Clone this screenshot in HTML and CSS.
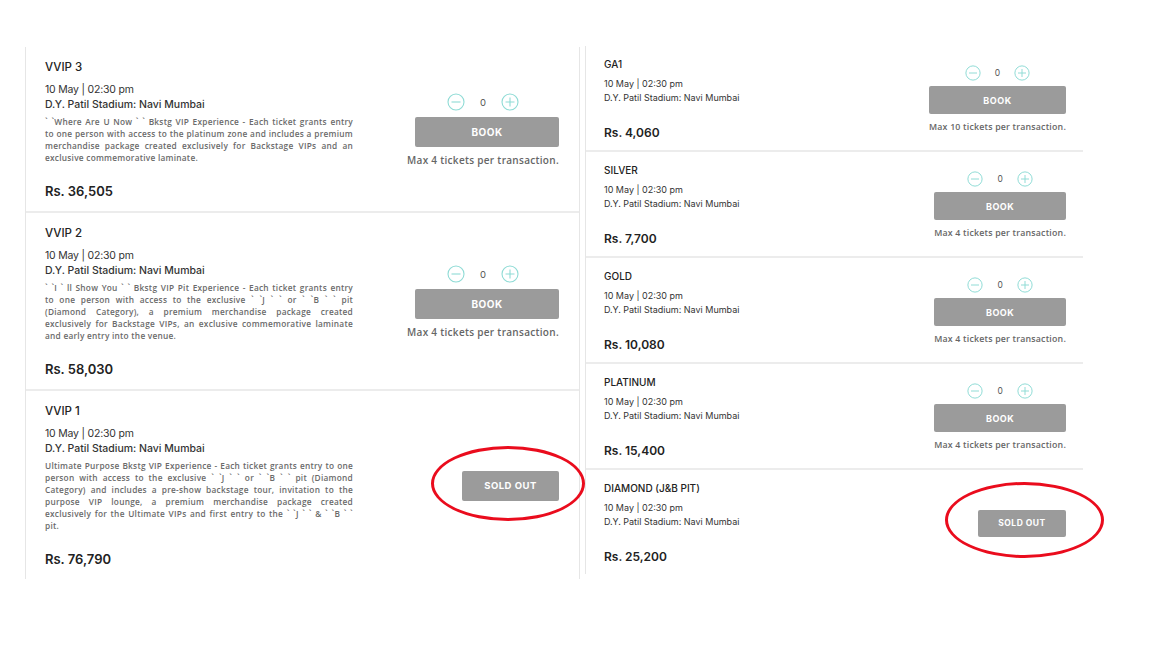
FILE: index.html
```html
<!DOCTYPE html>
<html lang="en">
<head>
    <meta charset="UTF-8">
    <title>Tickets</title>
    <link rel="stylesheet" href="styles.css">
</head>
<body>
    <div class="page">
        <section class="panel panel-big">
            <div class="ticket">
                <div class="info">
                    <h3 class="name">VVIP 3</h3>
                    <p class="date">10 May | 02:30 pm</p>
                    <p class="venue">D.Y. Patil Stadium: Navi Mumbai</p>
                    <p class="desc">
                        <span>` `Where Are U Now ` ` Bkstg VIP Experience - Each ticket grants entry</span>
                        <span>to one person with access to the platinum zone and includes a premium</span>
                        <span>merchandise package created exclusively for Backstage VIPs and an</span>
                        <span class="end">exclusive commemorative laminate.</span>
                    </p>
                    <p class="price">Rs. 36,505</p>
                </div>
                <div class="action">
                    <div class="stepper">
                        <svg class="step" viewBox="0 0 18 18"><circle cx="9" cy="9" r="8"/><path d="M4.5 9h9"/></svg>
                        <span class="count">0</span>
                        <svg class="step" viewBox="0 0 18 18"><circle cx="9" cy="9" r="8"/><path d="M4.5 9h9M9 4.5v9"/></svg>
                    </div>
                    <button class="book">BOOK</button>
                    <p class="limit">Max 4 tickets per transaction.</p>
                </div>
            </div>
            <div class="ticket">
                <div class="info">
                    <h3 class="name">VVIP 2</h3>
                    <p class="date">10 May | 02:30 pm</p>
                    <p class="venue">D.Y. Patil Stadium: Navi Mumbai</p>
                    <p class="desc">
                        <span>` `I ` ll Show You ` ` Bkstg VIP Pit Experience - Each ticket grants entry</span>
                        <span>to one person with access to the exclusive ` `J ` ` or ` `B ` ` pit</span>
                        <span>(Diamond Category), a premium merchandise package created</span>
                        <span>exclusively for Backstage VIPs, an exclusive commemorative laminate</span>
                        <span class="end">and early entry into the venue.</span>
                    </p>
                    <p class="price">Rs. 58,030</p>
                </div>
                <div class="action">
                    <div class="stepper">
                        <svg class="step" viewBox="0 0 18 18"><circle cx="9" cy="9" r="8"/><path d="M4.5 9h9"/></svg>
                        <span class="count">0</span>
                        <svg class="step" viewBox="0 0 18 18"><circle cx="9" cy="9" r="8"/><path d="M4.5 9h9M9 4.5v9"/></svg>
                    </div>
                    <button class="book">BOOK</button>
                    <p class="limit">Max 4 tickets per transaction.</p>
                </div>
            </div>
            <div class="ticket">
                <div class="info">
                    <h3 class="name">VVIP 1</h3>
                    <p class="date">10 May | 02:30 pm</p>
                    <p class="venue">D.Y. Patil Stadium: Navi Mumbai</p>
                    <p class="desc">
                        <span>Ultimate Purpose Bkstg VIP Experience - Each ticket grants entry to one</span>
                        <span>person with access to the exclusive ` `J ` ` or ` `B ` ` pit (Diamond</span>
                        <span>Category) and includes a pre-show backstage tour, invitation to the</span>
                        <span>purpose VIP lounge, a premium merchandise package created</span>
                        <span>exclusively for the Ultimate VIPs and first entry to the ` `J ` ` &amp; ` `B ` `</span>
                        <span class="end">pit.</span>
                    </p>
                    <p class="price">Rs. 76,790</p>
                </div>
                <div class="action">
                    <div class="sold-wrap">
                        <button class="sold">SOLD OUT</button>
                        <span class="circled"></span>
                    </div>
                </div>
            </div>
        </section>

        <section class="panel panel-small">
            <div class="ticket">
                <div class="info">
                    <h3 class="name">GA1</h3>
                    <p class="date">10 May | 02:30 pm</p>
                    <p class="venue">D.Y. Patil Stadium: Navi Mumbai</p>
                    <p class="price">Rs. 4,060</p>
                </div>
                <div class="action">
                    <div class="stepper">
                        <svg class="step" viewBox="0 0 18 18"><circle cx="9" cy="9" r="8"/><path d="M4.5 9h9"/></svg>
                        <span class="count">0</span>
                        <svg class="step" viewBox="0 0 18 18"><circle cx="9" cy="9" r="8"/><path d="M4.5 9h9M9 4.5v9"/></svg>
                    </div>
                    <button class="book">BOOK</button>
                    <p class="limit">Max 10 tickets per transaction.</p>
                </div>
            </div>
            <div class="ticket">
                <div class="info">
                    <h3 class="name">SILVER</h3>
                    <p class="date">10 May | 02:30 pm</p>
                    <p class="venue">D.Y. Patil Stadium: Navi Mumbai</p>
                    <p class="price">Rs. 7,700</p>
                </div>
                <div class="action">
                    <div class="stepper">
                        <svg class="step" viewBox="0 0 18 18"><circle cx="9" cy="9" r="8"/><path d="M4.5 9h9"/></svg>
                        <span class="count">0</span>
                        <svg class="step" viewBox="0 0 18 18"><circle cx="9" cy="9" r="8"/><path d="M4.5 9h9M9 4.5v9"/></svg>
                    </div>
                    <button class="book">BOOK</button>
                    <p class="limit">Max 4 tickets per transaction.</p>
                </div>
            </div>
            <div class="ticket">
                <div class="info">
                    <h3 class="name">GOLD</h3>
                    <p class="date">10 May | 02:30 pm</p>
                    <p class="venue">D.Y. Patil Stadium: Navi Mumbai</p>
                    <p class="price">Rs. 10,080</p>
                </div>
                <div class="action">
                    <div class="stepper">
                        <svg class="step" viewBox="0 0 18 18"><circle cx="9" cy="9" r="8"/><path d="M4.5 9h9"/></svg>
                        <span class="count">0</span>
                        <svg class="step" viewBox="0 0 18 18"><circle cx="9" cy="9" r="8"/><path d="M4.5 9h9M9 4.5v9"/></svg>
                    </div>
                    <button class="book">BOOK</button>
                    <p class="limit">Max 4 tickets per transaction.</p>
                </div>
            </div>
            <div class="ticket">
                <div class="info">
                    <h3 class="name">PLATINUM</h3>
                    <p class="date">10 May | 02:30 pm</p>
                    <p class="venue">D.Y. Patil Stadium: Navi Mumbai</p>
                    <p class="price">Rs. 15,400</p>
                </div>
                <div class="action">
                    <div class="stepper">
                        <svg class="step" viewBox="0 0 18 18"><circle cx="9" cy="9" r="8"/><path d="M4.5 9h9"/></svg>
                        <span class="count">0</span>
                        <svg class="step" viewBox="0 0 18 18"><circle cx="9" cy="9" r="8"/><path d="M4.5 9h9M9 4.5v9"/></svg>
                    </div>
                    <button class="book">BOOK</button>
                    <p class="limit">Max 4 tickets per transaction.</p>
                </div>
            </div>
            <div class="ticket">
                <div class="info">
                    <h3 class="name">DIAMOND (J&amp;B PIT)</h3>
                    <p class="date">10 May | 02:30 pm</p>
                    <p class="venue">D.Y. Patil Stadium: Navi Mumbai</p>
                    <p class="price">Rs. 25,200</p>
                </div>
                <div class="action">
                    <div class="sold-wrap">
                        <button class="sold">SOLD OUT</button>
                        <span class="circled"></span>
                    </div>
                </div>
            </div>
        </section>
    </div>
</body>
</html>
```

FILE: styles.css
```css
body {
    margin: 0;
    background: #fff;
    font-family: "Inter", "Open Sans", sans-serif;
    color: #222;
}
p, h3 {
    margin: 0;
}
.page {
    display: flex;
    align-items: flex-start;
    gap: 5px;
    padding: 46px 0 0 25px;
}
.panel {
    border-left: 1px solid #e6e6e6;
}
.panel-big {
    width: 553px;
    margin-top: 1px;
    border-right: 1px solid #e6e6e6;
}
.panel-small {
    width: 497px;
}
.ticket {
    display: flex;
    align-items: center;
    justify-content: space-between;
    border-bottom: 2px solid #ececec;
}
.ticket:last-child {
    border-bottom: none;
}

/* left column, larger cards */
.panel-big .ticket {
    padding: 13px 20px 12px 19px;
}
.panel-big .name {
    font-size: 11.5px;
    font-weight: 500;
    line-height: 14px;
}
.panel-big .date {
    margin-top: 8px;
    font-size: 10.5px;
    line-height: 15px;
    color: #333;
    letter-spacing: -0.2px;
}
.panel-big .venue {
    font-size: 10.5px;
    font-weight: 500;
    line-height: 15px;
    color: #333;
}
.desc {
    width: 308px;
    margin-top: 4px;
    font-family: "Open Sans", sans-serif;
    font-size: 8.3px;
    font-weight: 600;
    line-height: 12px;
    color: #6a6a6a;
    letter-spacing: 0.25px;
}
.desc span {
    display: block;
    white-space: nowrap;
    text-align: justify;
    text-align-last: justify;
}
.desc .end {
    text-align-last: left;
}
.panel-big .price {
    margin-top: 19px;
    font-size: 13px;
    font-weight: 600;
    line-height: 16px;
}
.panel-big .action {
    width: 152px;
}
.panel-big .step {
    width: 18px;
    height: 18px;
}
.panel-big .stepper {
    gap: 15px;
}
.panel-big .count {
    font-size: 9.5px;
}
.panel-big .book {
    align-self: flex-end;
    width: 144px;
    height: 30px;
    margin-top: 6px;
    font-size: 10px;
}
.panel-big .limit {
    margin-top: 7px;
    font-size: 10px;
    letter-spacing: 0.3px;
}
.panel-big .sold {
    width: 97px;
    height: 30px;
    font-size: 9.5px;
}
.panel-big .action:has(.sold-wrap) {
    align-items: flex-end;
}
.panel-big .circled {
    left: -31px;
    top: -25px;
    width: 148px;
    height: 69px;
}

/* right column, compact cards */
.panel-small .ticket {
    padding: 12px 17px 10px 18px;
}
.panel-small .name {
    font-size: 10px;
    font-weight: 500;
    line-height: 12px;
}
.panel-small .date {
    margin-top: 8px;
    font-size: 9px;
    line-height: 12px;
    color: #333;
}
.panel-small .venue {
    margin-top: 2px;
    font-size: 9px;
    line-height: 12px;
    color: #333;
}
.panel-small .price {
    margin-top: 22px;
    font-size: 12px;
    font-weight: 600;
    line-height: 14px;
}
.panel-small .step {
    width: 16px;
    height: 16px;
}
.panel-small .stepper {
    gap: 14px;
}
.panel-small .count {
    font-size: 8.5px;
}
.panel-small .book {
    width: 100%;
    height: 28px;
    margin-top: 5px;
    font-size: 9px;
}
.panel-small .limit {
    margin-top: 7px;
    font-size: 8.8px;
}
.panel-small .sold {
    width: 88px;
    height: 27px;
    font-size: 8.5px;
}
.panel-small .circled {
    left: -33px;
    top: -28px;
    width: 153px;
    height: 70px;
}

/* booking controls */
.action {
    display: flex;
    flex-direction: column;
    align-items: stretch;
}
.stepper {
    display: flex;
    justify-content: center;
    align-items: center;
}
.step {
    fill: none;
    stroke: #8edbd5;
    stroke-width: 1.1;
}
.count {
    color: #555;
}
.book, .sold {
    border: none;
    border-radius: 2px;
    background: #9b9b9b;
    color: #fff;
    font-family: "Inter", sans-serif;
    font-weight: 700;
    letter-spacing: 0.5px;
    padding: 0;
}
.limit {
    font-family: "Open Sans", sans-serif;
    font-weight: 600;
    line-height: 12px;
    color: #666;
    text-align: center;
    white-space: nowrap;
    letter-spacing: 0.2px;
}
.sold-wrap {
    position: relative;
    display: flex;
}
.circled {
    position: absolute;
    border: 3px solid #ea0c1d;
    border-radius: 50%;
    pointer-events: none;
}
```
